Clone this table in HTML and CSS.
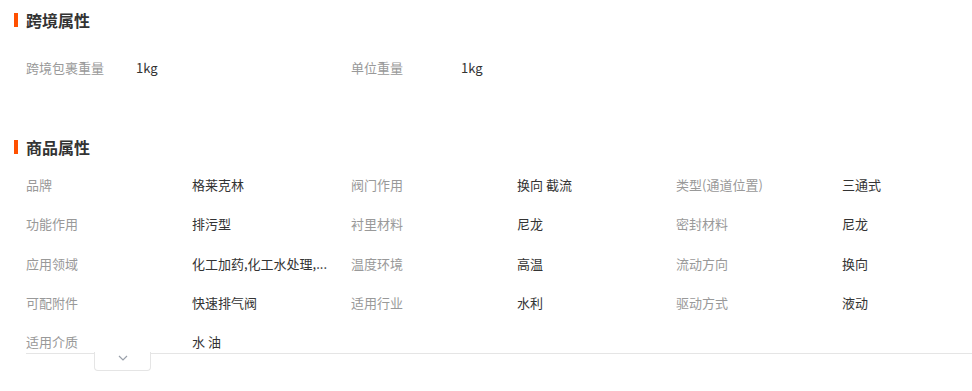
FILE: index.html
```html
<!DOCTYPE html>
<html lang="zh">
<head>
<meta charset="utf-8">
<title>属性</title>
<link rel="stylesheet" href="styles.css">
</head>
<body>
<section class="section first">
  <h2 class="title"><span class="bar"></span>跨境属性</h2>
  <div class="cross-row">
    <div class="cross-item"><span class="cross-label">跨境包裹重量</span><span class="cross-value">1kg</span></div>
    <div class="cross-item"><span class="cross-label">单位重量</span><span class="cross-value">1kg</span></div>
  </div>
</section>
<section class="section second">
  <h2 class="title"><span class="bar"></span>商品属性</h2>
  <div class="attr-wrap">
    <div class="attr-grid">
      <div class="attr"><span class="label">品牌</span><span class="value">格莱克林</span></div>
      <div class="attr"><span class="label">阀门作用</span><span class="value">换向 截流</span></div>
      <div class="attr"><span class="label">类型(通道位置)</span><span class="value">三通式</span></div>
      <div class="attr"><span class="label">功能作用</span><span class="value">排污型</span></div>
      <div class="attr"><span class="label">衬里材料</span><span class="value">尼龙</span></div>
      <div class="attr"><span class="label">密封材料</span><span class="value">尼龙</span></div>
      <div class="attr"><span class="label">应用领域</span><span class="value">化工加药,化工水处理,...</span></div>
      <div class="attr"><span class="label">温度环境</span><span class="value">高温</span></div>
      <div class="attr"><span class="label">流动方向</span><span class="value">换向</span></div>
      <div class="attr"><span class="label">可配附件</span><span class="value">快速排气阀</span></div>
      <div class="attr"><span class="label">适用行业</span><span class="value">水利</span></div>
      <div class="attr"><span class="label">驱动方式</span><span class="value">液动</span></div>
      <div class="attr"><span class="label">适用介质</span><span class="value">水 油</span></div>
    </div>
    <button class="toggle" type="button" aria-label="展开">
      <svg width="10" height="6" viewBox="0 0 10 6"><path d="M1 1 L5 5 L9 1" fill="none" stroke="#9aa0aa" stroke-width="1.2"/></svg>
    </button>
  </div>
</section>
</body>
</html>
```
FILE: styles.css
```css
html, body {
  margin: 0;
  padding: 0;
  background: #fff;
}
body {
  font-family: "Noto Sans CJK SC", "Noto Sans", sans-serif;
  font-size: 13px;
  color: #333;
  padding-bottom: 30px;
}
.section.first {
  padding-top: 10px;
}
.section.second {
  padding-top: 59px;
}
.title {
  margin: 0;
  height: 20px;
  line-height: 20px;
  display: flex;
  align-items: center;
  gap: 8px;
  padding-left: 14px;
  font-size: 16px;
  font-weight: bold;
  color: #333;
}
.bar {
  width: 4px;
  height: 14px;
  background: #ff5000;
}
.cross-row {
  margin-top: 28px;
  padding-left: 26px;
  display: flex;
  line-height: 20px;
}
.cross-item {
  width: 325px;
  display: flex;
}
.cross-label {
  width: 110px;
  color: #999;
}
.cross-value {
  color: #333;
}
.attr-wrap {
  position: relative;
  margin-top: 18px;
  margin-left: 26px;
  padding-bottom: 1px;
  border-bottom: 1px solid #e5e5e5;
}
.attr-grid {
  display: grid;
  grid-template-columns: repeat(3, 325px);
  row-gap: 19.25px;
  line-height: 20px;
}
.attr {
  display: flex;
  min-width: 0;
}
.label {
  width: 166px;
  flex: none;
  color: #999;
}
.value {
  white-space: nowrap;
  color: #333;
}
.toggle {
  position: absolute;
  left: 68px;
  top: 100%;
  margin-top: -1px;
  width: 57px;
  height: 19px;
  padding: 3px 0 0;
  background: #fff;
  border: 1px solid #e5e5e5;
  border-top: none;
  border-radius: 0 0 4px 4px;
  display: flex;
  align-items: flex-start;
  justify-content: center;
  box-sizing: border-box;
  cursor: pointer;
}
.toggle svg {
  display: block;
}
```
